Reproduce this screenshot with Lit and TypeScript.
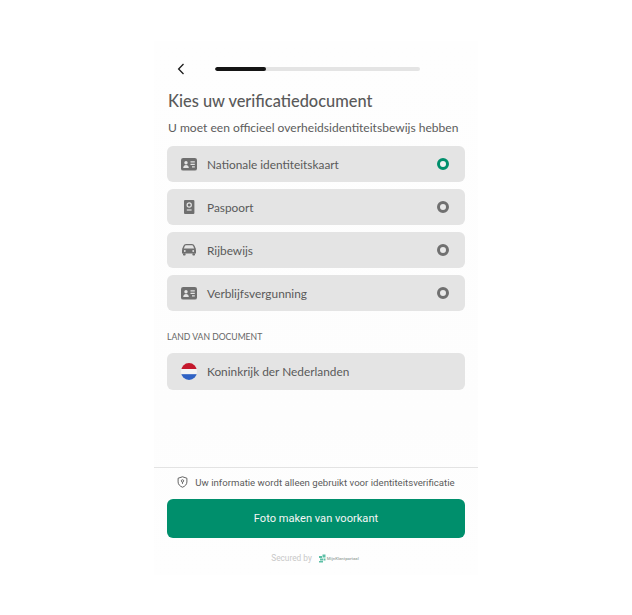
import { LitElement, html, css } from "lit";
import { customElement } from "lit/decorators.js";

const idCard = html`<svg class="ic" viewBox="0 0 16 13" width="16" height="13"><rect width="16" height="12.6" rx="2.2" fill="#6f6f6f"/><circle cx="5" cy="4.8" r="1.7" fill="#e4e4e4"/><path d="M2.2 10c0-1.9 1.3-2.9 2.8-2.9s2.8 1 2.8 2.9z" fill="#e4e4e4"/><path d="M9.5 3.9h4.3M9.5 6.4h4.3M11 8.9h2.8" stroke="#e4e4e4" stroke-width="1.1" fill="none"/></svg>`;
const passport = html`<svg class="ic" viewBox="0 0 16 16" width="16" height="16"><rect x="3" y="1" width="10.4" height="14" rx="1" fill="#6f6f6f"/><circle cx="8.2" cy="6" r="2.1" fill="none" stroke="#e4e4e4" stroke-width="1.2"/><path d="M5.8 11h4.8" stroke="#e4e4e4" stroke-width="1.2"/></svg>`;
const car = html`<svg class="ic" viewBox="0 0 16 14" width="16" height="14"><path d="M1.8 6.200 3.200 2.800C3.500 2 4.200 1.600 5 1.600h6c.8 0 1.500.4 1.800 1.200l1.400 3.400" fill="none" stroke="#6f6f6f" stroke-width="1.4"/><path d="M1 7.200c0-1 .7-1.600 1.600-1.600h10.800c.9 0 1.600.6 1.600 1.600v3.300H1z" fill="#6f6f6f"/><rect x="2" y="10.200" width="2.600" height="2.400" rx=".8" fill="#6f6f6f"/><rect x="11.400" y="10.200" width="2.600" height="2.400" rx=".8" fill="#6f6f6f"/><circle cx="3.800" cy="8" r=".9" fill="#e4e4e4"/><circle cx="12.200" cy="8" r=".9" fill="#e4e4e4"/></svg>`;
const flag = html`<svg class="ic" viewBox="0 0 16 17" width="16" height="17"><defs><clipPath id="fc"><ellipse cx="8" cy="8.5" rx="8" ry="8.5"/></clipPath></defs><g clip-path="url(#fc)"><rect width="16" height="6" fill="#c4182c"/><rect y="6" width="16" height="5.2" fill="#f4f4f4"/><rect y="11.2" width="16" height="6" fill="#2f62c4"/></g></svg>`;

const docs = [
  { icon: idCard, name: "Nationale identiteitskaart", on: true },
  { icon: passport, name: "Paspoort", on: false },
  { icon: car, name: "Rijbewijs", on: false },
  { icon: idCard, name: "Verblijfsvergunning", on: false },
];

@customElement("app-root")
export class AppRoot extends LitElement {
  static styles = css`
    :host { display: block; width: 632px; height: 615px; background: #fff; font-family: "Lato", "Liberation Sans", sans-serif; color: #555; overflow: hidden; }
    .panel { box-sizing: border-box; margin: 41px 0 0 154px; width: 324px; height: 534px; background: linear-gradient(180deg, #fefefe 0%, #fdfdfd 70%, #fefefe 100%); display: flex; flex-direction: column; }
    .head { display: flex; align-items: center; height: 18px; margin-top: 19px; padding-left: 23px; }
    .back { display: block; }
    .track { margin-left: 30px; width: 205px; height: 3.5px; border-radius: 2px; background: #e4e4e4; overflow: hidden; }
    .fill { width: 51px; height: 100%; border-radius: 2px; background: #151515; }
    .body { padding: 0 13px; display: flex; flex-direction: column; flex: 1; }
    h1 { margin: 11px 1px 0; font-size: 16.4px; line-height: 24px; font-weight: 500; color: #5a5a5a; white-space: nowrap; }
    .sub { margin: 7px 1px 0; font-size: 12.05px; line-height: 16px; color: #5c5c5c; white-space: nowrap; }
    .list { margin-top: 10px; display: flex; flex-direction: column; gap: 7px; }
    .card { height: 36px; border-radius: 6px; background: #e4e4e4; display: flex; align-items: center; padding: 0 16.5px 0 14px; font-size: 11.85px; color: #5a5a5a; }
    .iconbox { width: 26px; flex: none; display: flex; }
    .card span { flex: 1; }
    .radio { box-sizing: border-box; width: 12px; height: 12px; border-radius: 50%; border: 3.8px solid #707070; background: #e9e9e9; }
    .radio.on { border-color: #008f6c; background: #f1f1f1; }
    .label { margin: 20px 0 0; font-size: 8.6px; line-height: 12px; color: #666; }
    .country { margin-top: 10px; height: 36.5px; }
    .foot { border-top: 1px solid #e3e3e3; height: 108px; box-sizing: border-box; display: flex; flex-direction: column; padding: 0 13px; font-family: "Roboto", "Liberation Sans", sans-serif; }
    .info { display: flex; align-items: center; justify-content: center; gap: 7px; height: 26px; margin-top: 1px; font-size: 9.65px; color: #5c5c5c; white-space: nowrap; }
    .info svg { flex: none; }
    button { display: block; width: 298px; height: 39px; margin-top: 4px; border: 0; border-radius: 6px; background: #008f6c; color: #f6f6f6; font: 400 11.1px "Roboto", "Liberation Sans", sans-serif; }
    .sec { display: flex; align-items: center; justify-content: center; gap: 6px; margin-top: 14px; margin-right: 2px; font-size: 8.3px; color: #c8c8c8; height: 12px; }
    .brand { display: flex; align-items: center; gap: 1px; color: #9aa5a2; font-size: 4.3px; font-weight: 500; }
  `;

  render() {
    return html`<div class="panel">
      <div class="head">
        <svg class="back" viewBox="0 0 8 12" width="8" height="12"><path d="M6.5 1 1.600 6l4.900 5" fill="none" stroke="#1c1c1c" stroke-width="1.3"/></svg>
        <div class="track"><div class="fill"></div></div>
      </div>
      <div class="body">
        <h1>Kies uw verificatiedocument</h1>
        <p class="sub">U moet een officieel overheidsidentiteitsbewijs hebben</p>
        <div class="list">
          ${docs.map((d) => html`<div class="card"><div class="iconbox">${d.icon}</div><span>${d.name}</span><div class="radio ${d.on ? "on" : ""}"></div></div>`)}
        </div>
        <div class="label">LAND VAN DOCUMENT</div>
        <div class="card country"><div class="iconbox">${flag}</div><span>Koninkrijk der Nederlanden</span></div>
      </div>
      <div class="foot">
        <div class="info">
          <svg viewBox="0 0 12 13" width="11" height="12"><path d="M6 .8 10.800 2.400v4c0 2.800-2 4.700-4.800 5.800C3.200 11.100 1.200 9.200 1.200 6.400v-4z" fill="none" stroke="#555" stroke-width="1"/><circle cx="6" cy="5.300" r="1.300" fill="none" stroke="#555" stroke-width=".9"/><path d="M6 6.600v2" stroke="#555" stroke-width=".9"/></svg>
          Uw informatie wordt alleen gebruikt voor identiteitsverificatie
        </div>
        <button>Foto maken van voorkant</button>
        <div class="sec">Secured by
          <div class="brand">
            <svg viewBox="0 0 8 9" width="8" height="9"><path d="M1 2h3v2H1zM4.500 .5h3v3h-3zM2 4.500h3v2H2zM1 7h4v1.500H1zM5.500 4.500h2v2h-2z" fill="#5dbfa6"/></svg>
            MijnKlantportaal
          </div>
        </div>
      </div>
    </div>`;
  }
}
